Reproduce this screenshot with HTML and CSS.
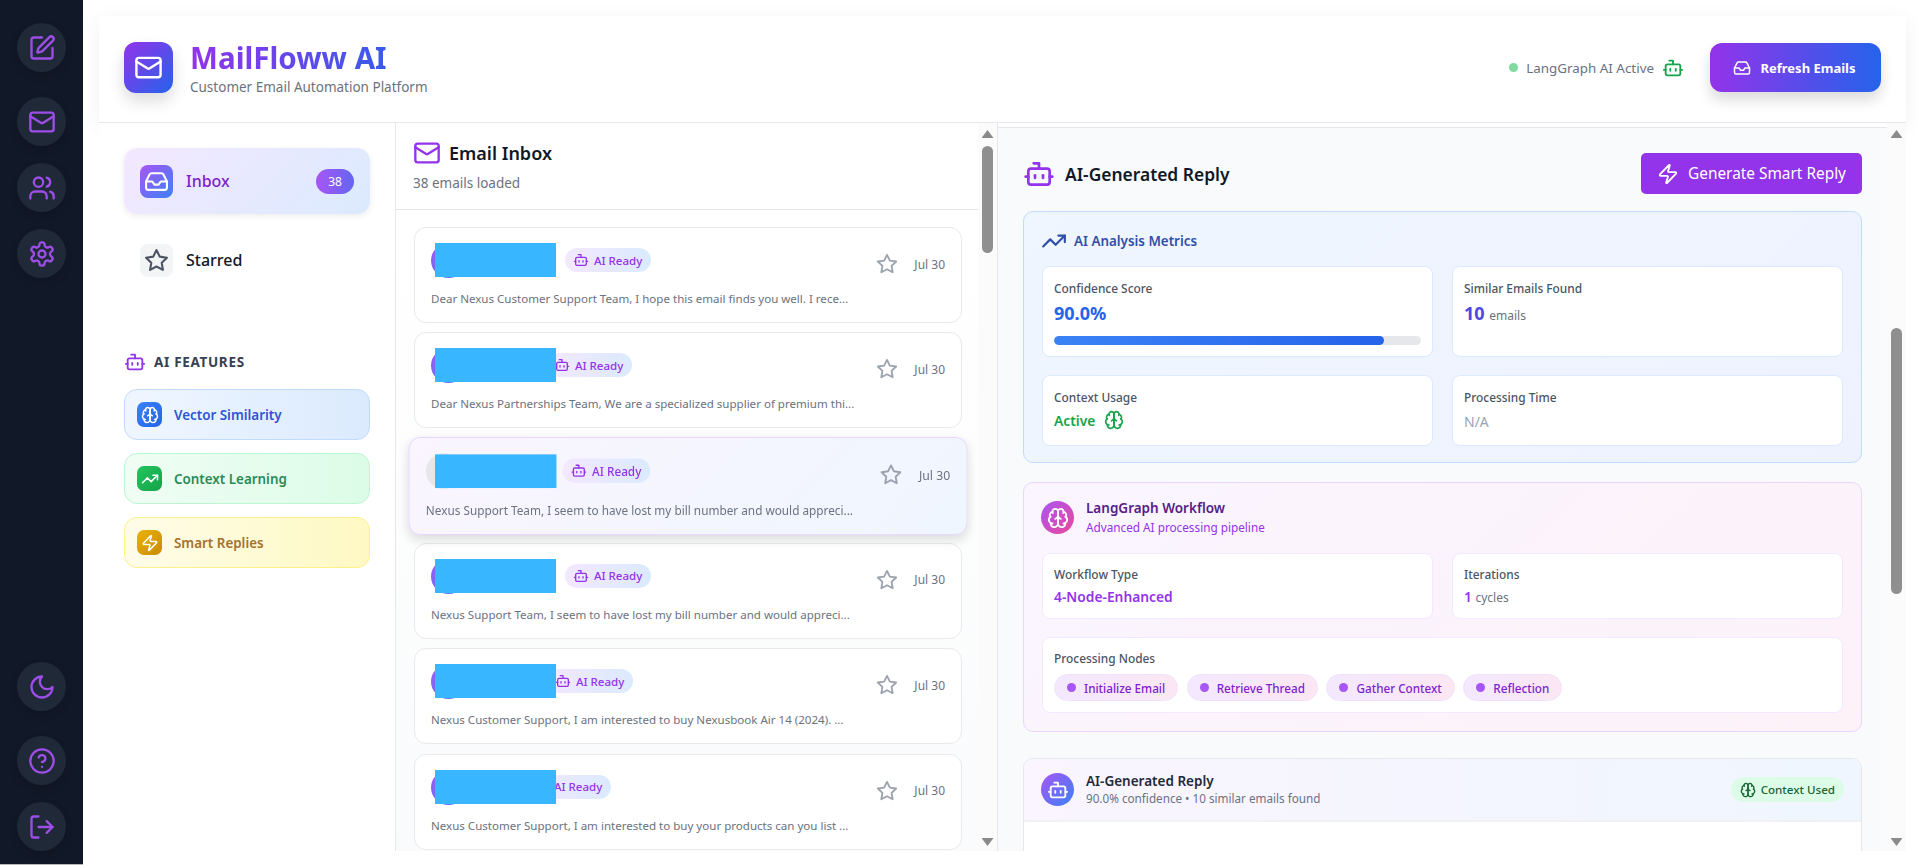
FILE: index.html
```html
<!DOCTYPE html>
<html lang="en">
<head>
<meta charset="utf-8">
<title>MailFloww AI</title>
<link rel="stylesheet" href="styles.css">
</head>
<body>
<svg class="defs" aria-hidden="true">
  <symbol id="i-pen" viewBox="0 0 24 24"><path d="M12 3H5a2 2 0 0 0-2 2v14a2 2 0 0 0 2 2h14a2 2 0 0 0 2-2v-7"/><path d="M18.375 2.625a1 1 0 0 1 3 3l-9.013 9.014a2 2 0 0 1-.853.505l-2.873.84a.5.5 0 0 1-.62-.62l.84-2.873a2 2 0 0 1 .506-.852z"/></symbol>
  <symbol id="i-mail" viewBox="0 0 24 24"><rect width="20" height="16" x="2" y="4" rx="2"/><path d="m22 7-8.97 5.7a1.94 1.94 0 0 1-2.06 0L2 7"/></symbol>
  <symbol id="i-users" viewBox="0 0 24 24"><path d="M16 21v-2a4 4 0 0 0-4-4H6a4 4 0 0 0-4 4v2"/><circle cx="9" cy="7" r="4"/><path d="M22 21v-2a4 4 0 0 0-3-3.87"/><path d="M16 3.13a4 4 0 0 1 0 7.75"/></symbol>
  <symbol id="i-settings" viewBox="0 0 24 24"><path d="M12.22 2h-.44a2 2 0 0 0-2 2v.18a2 2 0 0 1-1 1.73l-.43.25a2 2 0 0 1-2 0l-.15-.08a2 2 0 0 0-2.73.73l-.22.38a2 2 0 0 0 .73 2.73l.15.1a2 2 0 0 1 1 1.72v.51a2 2 0 0 1-1 1.74l-.15.09a2 2 0 0 0-.73 2.73l.22.38a2 2 0 0 0 2.73.73l.15-.08a2 2 0 0 1 2 0l.43.25a2 2 0 0 1 1 1.73V20a2 2 0 0 0 2 2h.44a2 2 0 0 0 2-2v-.18a2 2 0 0 1 1-1.73l.43-.25a2 2 0 0 1 2 0l.15.08a2 2 0 0 0 2.73-.73l.22-.39a2 2 0 0 0-.73-2.73l-.15-.08a2 2 0 0 1-1-1.74v-.5a2 2 0 0 1 1-1.74l.15-.09a2 2 0 0 0 .73-2.73l-.22-.38a2 2 0 0 0-2.73-.73l-.15.08a2 2 0 0 1-2 0l-.43-.25a2 2 0 0 1-1-1.73V4a2 2 0 0 0-2-2z"/><circle cx="12" cy="12" r="3"/></symbol>
  <symbol id="i-moon" viewBox="0 0 24 24"><path d="M12 3a6 6 0 0 0 9 9 9 9 0 1 1-9-9Z"/></symbol>
  <symbol id="i-help" viewBox="0 0 24 24"><circle cx="12" cy="12" r="10"/><path d="M9.09 9a3 3 0 0 1 5.83 1c0 2-3 3-3 3"/><path d="M12 17h.01"/></symbol>
  <symbol id="i-logout" viewBox="0 0 24 24"><path d="M9 21H5a2 2 0 0 1-2-2V5a2 2 0 0 1 2-2h4"/><polyline points="16 17 21 12 16 7"/><line x1="21" x2="9" y1="12" y2="12"/></symbol>
  <symbol id="i-inbox" viewBox="0 0 24 24"><polyline points="22 12 16 12 14 15 10 15 8 12 2 12"/><path d="M5.45 5.11 2 12v6a2 2 0 0 0 2 2h16a2 2 0 0 0 2-2v-6l-3.45-6.89A2 2 0 0 0 16.76 4H7.24a2 2 0 0 0-1.79 1.11z"/></symbol>
  <symbol id="i-star" viewBox="0 0 24 24"><polygon points="12 2 15.09 8.26 22 9.27 17 14.14 18.18 21.02 12 17.77 5.82 21.02 7 14.14 2 9.27 8.91 8.26 12 2"/></symbol>
  <symbol id="i-bot" viewBox="0 0 24 24"><path d="M12 8V4H8"/><rect width="16" height="12" x="4" y="8" rx="2"/><path d="M2 14h2"/><path d="M20 14h2"/><path d="M15 13v2"/><path d="M9 13v2"/></symbol>
  <symbol id="i-trend" viewBox="0 0 24 24"><polyline points="22 7 13.5 15.5 8.5 10.5 2 17"/><polyline points="16 7 22 7 22 13"/></symbol>
  <symbol id="i-zap" viewBox="0 0 24 24"><path d="M4 14a1 1 0 0 1-.78-1.63l9.9-10.2a.5.5 0 0 1 .86.46l-1.92 6.02A1 1 0 0 0 13 10h7a1 1 0 0 1 .78 1.63l-9.9 10.2a.5.5 0 0 1-.86-.46l1.92-6.02A1 1 0 0 0 11 14z"/></symbol>
  <symbol id="i-brain" viewBox="0 0 24 24"><path d="M12 5a3 3 0 1 0-5.997.125 4 4 0 0 0-2.526 5.77 4 4 0 0 0 .556 6.588A4 4 0 1 0 12 18Z"/><path d="M12 5a3 3 0 1 1 5.997.125 4 4 0 0 1 2.526 5.77 4 4 0 0 1-.556 6.588A4 4 0 1 1 12 18Z"/><path d="M15 13a4.5 4.5 0 0 1-3-4 4.5 4.5 0 0 1-3 4"/><path d="M17.599 6.5a3 3 0 0 0 .399-1.375"/><path d="M6.003 5.125A3 3 0 0 0 6.401 6.5"/><path d="M3.477 10.896a4 4 0 0 1 .585-.396"/><path d="M19.938 10.5a4 4 0 0 1 .585.396"/><path d="M6 18a4 4 0 0 1-1.967-.516"/><path d="M19.967 17.484A4 4 0 0 1 18 18"/></symbol>
</svg>

<nav class="rail">
  <div class="rail-group">
    <button class="rail-btn"><svg class="ico s28"><use href="#i-pen"/></svg></button>
    <button class="rail-btn gap-wide"><svg class="ico s28"><use href="#i-mail"/></svg></button>
    <button class="rail-btn"><svg class="ico s28"><use href="#i-users"/></svg></button>
    <button class="rail-btn"><svg class="ico s28"><use href="#i-settings"/></svg></button>
  </div>
  <div class="rail-group">
    <button class="rail-btn"><svg class="ico s28"><use href="#i-moon"/></svg></button>
    <button class="rail-btn gap-wide"><svg class="ico s28"><use href="#i-help"/></svg></button>
    <button class="rail-btn"><svg class="ico s28"><use href="#i-logout"/></svg></button>
  </div>
</nav>

<main class="main">
  <header class="topbar">
    <div class="brand">
      <div class="logo"><svg class="ico s29"><use href="#i-mail"/></svg></div>
      <div>
        <h1 class="brand-name">MailFloww AI</h1>
        <p class="brand-sub">Customer Email Automation Platform</p>
      </div>
    </div>
    <div class="top-actions">
      <span class="status-dot"></span>
      <span class="status-text">LangGraph AI Active</span>
      <svg class="ico s22 green status-bot"><use href="#i-bot"/></svg>
      <button class="refresh"><svg class="ico s18"><use href="#i-inbox"/></svg>Refresh Emails</button>
    </div>
  </header>

  <div class="panels">
    <aside class="left">
      <a class="nav-item is-current">
        <span class="nav-ico"><svg class="ico s25"><use href="#i-inbox"/></svg></span>
        <span class="nav-label">Inbox</span>
        <span class="badge">38</span>
      </a>
      <a class="nav-item">
        <span class="nav-ico plain"><svg class="ico s25"><use href="#i-star"/></svg></span>
        <span class="nav-label">Starred</span>
      </a>
      <h2 class="features-title"><svg class="ico s22 purple"><use href="#i-bot"/></svg>AI FEATURES</h2>
      <div class="feature blue"><span class="feature-ico"><svg class="ico s18"><use href="#i-brain"/></svg></span>Vector Similarity</div>
      <div class="feature grn"><span class="feature-ico"><svg class="ico s18"><use href="#i-trend"/></svg></span>Context Learning</div>
      <div class="feature yel"><span class="feature-ico"><svg class="ico s18"><use href="#i-zap"/></svg></span>Smart Replies</div>
    </aside>

    <section class="inbox">
      <div class="inbox-body">
        <div class="inbox-head">
          <h2 class="inbox-title"><svg class="ico s28 purple"><use href="#i-mail"/></svg>Email Inbox</h2>
          <p class="inbox-sub">38 emails loaded</p>
        </div>
        <div class="list">
          <article class="mail">
            <div class="mail-row">
              <span class="avatar"></span><span class="name n82"></span>
              <span class="ready"><svg class="ico s16"><use href="#i-bot"/></svg>AI Ready</span>
              <span class="mail-meta"><svg class="ico s22 star"><use href="#i-star"/></svg><time>Jul 30</time></span>
            </div>
            <p class="preview">Dear Nexus Customer Support Team, I hope this email finds you well. I rece...</p>
            <span class="redact"></span>
          </article>
          <article class="mail">
            <div class="mail-row">
              <span class="avatar"></span><span class="name n63"></span>
              <span class="ready"><svg class="ico s16"><use href="#i-bot"/></svg>AI Ready</span>
              <span class="mail-meta"><svg class="ico s22 star"><use href="#i-star"/></svg><time>Jul 30</time></span>
            </div>
            <p class="preview">Dear Nexus Partnerships Team, We are a specialized supplier of premium thi...</p>
            <span class="redact"></span>
          </article>
          <article class="mail selected">
            <div class="mail-row">
              <span class="avatar"></span><span class="name n82"></span>
              <span class="ready"><svg class="ico s16"><use href="#i-bot"/></svg>AI Ready</span>
              <span class="mail-meta"><svg class="ico s22 star"><use href="#i-star"/></svg><time>Jul 30</time></span>
            </div>
            <p class="preview">Nexus Support Team, I seem to have lost my bill number and would appreci...</p>
            <span class="redact"></span>
          </article>
          <article class="mail">
            <div class="mail-row">
              <span class="avatar"></span><span class="name n82"></span>
              <span class="ready"><svg class="ico s16"><use href="#i-bot"/></svg>AI Ready</span>
              <span class="mail-meta"><svg class="ico s22 star"><use href="#i-star"/></svg><time>Jul 30</time></span>
            </div>
            <p class="preview">Nexus Support Team, I seem to have lost my bill number and would appreci...</p>
            <span class="redact"></span>
          </article>
          <article class="mail">
            <div class="mail-row">
              <span class="avatar"></span><span class="name n64"></span>
              <span class="ready"><svg class="ico s16"><use href="#i-bot"/></svg>AI Ready</span>
              <span class="mail-meta"><svg class="ico s22 star"><use href="#i-star"/></svg><time>Jul 30</time></span>
            </div>
            <p class="preview">Nexus Customer Support, I am interested to buy Nexusbook Air 14 (2024). ...</p>
            <span class="redact"></span>
          </article>
          <article class="mail">
            <div class="mail-row">
              <span class="avatar"></span><span class="name n42"></span>
              <span class="ready"><svg class="ico s16"><use href="#i-bot"/></svg>AI Ready</span>
              <span class="mail-meta"><svg class="ico s22 star"><use href="#i-star"/></svg><time>Jul 30</time></span>
            </div>
            <p class="preview">Nexus Customer Support, I am interested to buy your products can you list ...</p>
            <span class="redact"></span>
          </article>
        </div>
      </div>
      <div class="sbar">
        <span class="arrow up"></span>
        <span class="thumb t-inbox"></span>
        <span class="arrow down"></span>
      </div>
    </section>

    <section class="detail">
      <div class="detail-body">
        <div class="detail-head">
          <h2 class="detail-title"><svg class="ico s32 purple"><use href="#i-bot"/></svg>AI-Generated Reply</h2>
          <button class="generate"><svg class="ico s22"><use href="#i-zap"/></svg>Generate Smart Reply</button>
        </div>

        <div class="metrics">
          <h3 class="metrics-title"><svg class="ico s26"><use href="#i-trend"/></svg>AI Analysis Metrics</h3>
          <div class="metric-grid">
            <div class="cell">
              <div class="cell-label">Confidence Score</div>
              <div class="big blue-text">90.0%</div>
              <div class="bar"><div class="bar-fill"></div></div>
            </div>
            <div class="cell">
              <div class="cell-label">Similar Emails Found</div>
              <div class="big indigo-text">10 <small>emails</small></div>
            </div>
            <div class="cell">
              <div class="cell-label">Context Usage</div>
              <div class="ctx-on">Active <svg class="ico s20"><use href="#i-brain"/></svg></div>
            </div>
            <div class="cell">
              <div class="cell-label">Processing Time</div>
              <div class="na">N/A</div>
            </div>
          </div>
        </div>

        <div class="workflow">
          <div class="wf-head">
            <span class="round pink"><svg class="ico s22"><use href="#i-brain"/></svg></span>
            <div>
              <h3 class="wf-title">LangGraph Workflow</h3>
              <p class="wf-sub">Advanced AI processing pipeline</p>
            </div>
          </div>
          <div class="wf-grid">
            <div class="cell wf-cell">
              <div class="cell-label">Workflow Type</div>
              <div class="wf-value">4-Node-Enhanced</div>
            </div>
            <div class="cell wf-cell">
              <div class="cell-label">Iterations</div>
              <div class="wf-value">1 <small>cycles</small></div>
            </div>
            <div class="cell wf-cell wide">
              <div class="cell-label">Processing Nodes</div>
              <div class="nodes">
                <span class="node">Initialize Email</span>
                <span class="node">Retrieve Thread</span>
                <span class="node">Gather Context</span>
                <span class="node">Reflection</span>
              </div>
            </div>
          </div>
        </div>

        <div class="reply">
          <div class="reply-head">
            <span class="round violet"><svg class="ico s22"><use href="#i-bot"/></svg></span>
            <div>
              <h3 class="reply-title">AI-Generated Reply</h3>
              <p class="reply-sub">90.0% confidence • 10 similar emails found</p>
            </div>
            <span class="used"><svg class="ico s16"><use href="#i-brain"/></svg>Context Used</span>
          </div>
          <div class="reply-body"></div>
        </div>
      </div>
      <div class="sbar">
        <span class="arrow up"></span>
        <span class="thumb t-detail"></span>
        <span class="arrow down"></span>
      </div>
    </section>
  </div>
</main>
</body>
</html>
```

FILE: styles.css
```css
* { box-sizing: border-box; }
html, body { height: 100%; }
body {
  margin: 0;
  display: flex;
  overflow: hidden;
  background: #fff;
  color: #111827;
  font-family: "Noto Sans", "Open Sans", sans-serif;
}
h1, h2, h3, p { margin: 0; }
button { font-family: inherit; border: 0; cursor: pointer; }

.defs { display: none; }
.ico { display: block; flex: none; fill: none; stroke: currentColor; stroke-width: 2; stroke-linecap: round; stroke-linejoin: round; }
.s16 { width: 16px; height: 16px; }
.s18 { width: 18px; height: 18px; }
.s20 { width: 20px; height: 20px; }
.s22 { width: 22px; height: 22px; }
.s25 { width: 25px; height: 25px; }
.s26 { width: 26px; height: 26px; }
.s28 { width: 28px; height: 28px; }
.s29 { width: 29px; height: 29px; }
.s32 { width: 32px; height: 32px; }
.purple { color: #9333ea; }
.green { color: #16a34a; }

/* Left icon rail */
.rail {
  flex: none;
  width: 83px;
  height: 865px;
  background: #111827;
  border-bottom: 1px solid #b4b6ba;
  padding: 23px 0 13px;
  display: flex;
  flex-direction: column;
  justify-content: space-between;
  align-items: center;
}
.rail-group { display: flex; flex-direction: column; gap: 17px; }
.rail-btn {
  width: 49px;
  height: 49px;
  border-radius: 50%;
  background: #1f2937;
  color: #9d4ee6;
  display: flex;
  align-items: center;
  justify-content: center;
  padding: 0;
  box-shadow: 0 4px 8px rgba(0,0,0,.12);
}
.rail-btn.gap-wide { margin-top: 8px; }

/* Main frame */
.main {
  flex: 1;
  min-width: 0;
  height: 865px;
  padding: 16px 14px 14px 16px;
  display: flex;
  flex-direction: column;
}
.topbar {
  flex: none;
  height: 107px;
  padding: 0 25px 4px;
  display: flex;
  align-items: center;
  justify-content: space-between;
  background: #fff;
  border-bottom: 1px solid #e5e7eb;
  box-shadow: 0 4px 20px rgba(0,0,0,.06);
}
.brand { display: flex; align-items: center; gap: 17px; }
.logo {
  width: 49px;
  height: 51px;
  border-radius: 12px;
  background: linear-gradient(135deg, #9333ea, #2563eb);
  color: #fff;
  display: flex;
  align-items: center;
  justify-content: center;
  box-shadow: 0 8px 16px rgba(0,0,0,.14);
}
.brand-name {
  font-size: 29.6px;
  line-height: 36px;
  font-weight: 700;
  background: linear-gradient(90deg, #9333ea, #2563eb);
  -webkit-background-clip: text;
  background-clip: text;
  color: transparent;
  margin-top: 2px;
}
.brand-sub { font-size: 13.5px; line-height: 20px; color: #6b7280; margin-top: 1px; }
.top-actions { display: flex; align-items: center; }
.status-dot { width: 9px; height: 9px; border-radius: 50%; background: #7fdc9e; margin: 1px 8px 0 0; }
.status-text { font-size: 13.4px; color: #6b7280; margin-top: 2px; }
.status-bot { margin: 1px 26px 0 8px; }
.refresh {
  width: 171px;
  height: 49px;
  padding: 2px 2px 0 0;
  border-radius: 12px;
  background: linear-gradient(90deg, #9333ea, #2563eb);
  color: #fff;
  font-size: 13px;
  font-weight: 700;
  display: flex;
  align-items: center;
  justify-content: center;
  gap: 9px;
  box-shadow: 0 8px 14px rgba(0,0,0,.14);
}

.panels { flex: 1; min-height: 0; display: flex; background: #fff; }

/* Folder column */
.left {
  flex: none;
  width: 297px;
  padding: 25px 25px 0;
  border-right: 1px solid #e5e7eb;
  background: #fff;
}
.nav-item {
  height: 66px;
  border-radius: 13px;
  padding: 0 16px;
  display: flex;
  align-items: center;
  gap: 13px;
  margin-bottom: 13px;
  font-size: 16px;
  font-weight: 500;
  color: #111827;
}
.nav-item.is-current {
  background: linear-gradient(135deg, #f3e8ff, #dbeafe);
  color: #7e22ce;
  box-shadow: 0 2px 6px rgba(0,0,0,.08);
}
.nav-ico {
  width: 33px;
  height: 33px;
  border-radius: 8px;
  display: flex;
  align-items: center;
  justify-content: center;
  color: #fff;
  background: linear-gradient(135deg, #a855f7, #3b82f6);
}
.nav-ico.plain { background: #f3f4f6; color: #4b5563; }
.badge {
  margin-left: auto;
  width: 38px;
  height: 25px;
  border-radius: 13px;
  background: linear-gradient(90deg, #a855f7, #6366f1);
  color: #fff;
  font-size: 12px;
  font-weight: 400;
  display: flex;
  align-items: center;
  justify-content: center;
}
.features-title {
  margin: 59px 0 17px;
  height: 20px;
  display: flex;
  align-items: center;
  gap: 8px;
  font-size: 13.5px;
  font-weight: 700;
  letter-spacing: .05em;
  color: #374151;
}
.feature {
  height: 51px;
  margin-bottom: 13px;
  padding: 0 12px;
  border: 1px solid;
  border-radius: 13px;
  display: flex;
  align-items: center;
  gap: 12px;
  font-size: 13.4px;
  font-weight: 600;
}
.feature-ico {
  width: 25px;
  height: 25px;
  border-radius: 7px;
  display: flex;
  align-items: center;
  justify-content: center;
  color: #fff;
}
.feature.blue { background: linear-gradient(90deg, #eff6ff, #dbeafe); border-color: #bfdbfe; color: #2f55d4; }
.feature.blue .feature-ico { background: linear-gradient(135deg, #3b82f6, #2563eb); }
.feature.grn { background: linear-gradient(90deg, #f0fdf4, #dcfce7); border-color: #bbf7d0; color: #2b8a57; }
.feature.grn .feature-ico { background: linear-gradient(135deg, #22c55e, #16a34a); }
.feature.yel { background: linear-gradient(90deg, #fefce8, #fef9c3); border-color: #fef08a; color: #a5722a; }
.feature.yel .feature-ico { background: linear-gradient(135deg, #eab308, #ca8a04); }

/* Fake scrollbars */
.sbar {
  flex: none;
  width: 19px;
  display: flex;
  flex-direction: column;
  align-items: center;
  padding: 7px 0 5px;
  background: #fbfbfc;
}
.arrow { flex: none; width: 12px; height: 8px; background: #8a8a8a; }
.arrow.up { clip-path: polygon(50% 0, 100% 100%, 0 100%); }
.arrow.down { clip-path: polygon(0 0, 100% 0, 50% 100%); margin-top: auto; }
.thumb { flex: none; width: 11px; border-radius: 6px; background: #8f8f8f; }
.t-inbox { height: 107px; margin-top: 8px; }
.t-detail { height: 266px; margin-top: 190px; }

/* Inbox column */
.inbox {
  flex: none;
  width: 602px;
  display: flex;
  border-right: 1px solid #e5e7eb;
  background: #fff;
}
.inbox-body { flex: 1; min-width: 0; display: flex; flex-direction: column; overflow: hidden; }
.inbox-head { flex: none; height: 87px; padding: 17px 18px 0 17px; border-bottom: 1px solid #e5e7eb; }
.inbox-title { display: flex; align-items: center; gap: 8px; height: 26px; font-size: 18px; font-weight: 600; color: #111827; }
.inbox-sub { font-size: 13.5px; line-height: 18px; color: #6b7280; margin-top: 8px; }
.list { flex: 1; min-height: 0; padding: 17px 16px 0 18px; background: linear-gradient(180deg, #fff, #fafbfc); }
.mail {
  position: relative;
  height: 96px;
  margin-bottom: 9.33px;
  padding: 15px 16px 0 16px;
  background: #fff;
  border: 1px solid #e8eaee;
  border-radius: 12px;
}
.mail.selected {
  z-index: 1;
  transform: scale(1.02);
  background: linear-gradient(135deg, #faf5ff, #eff6ff);
  border-color: #e9d5ff;
  box-shadow: 0 4px 10px rgba(0,0,0,.13);
}
.mail-row { display: flex; align-items: flex-start; height: 35px; }
.avatar { flex: none; width: 35px; height: 35px; border-radius: 50%; background: linear-gradient(135deg, #a855f7, #3b82f6); margin-right: 9px; }
.selected .avatar { background: #e5e7eb; }
.name { flex: none; margin-right: 8px; }
.n82 { width: 82px; }
.n63 { width: 63px; }
.n64 { width: 64px; }
.n42 { width: 42px; }
.ready {
  flex: none;
  height: 24px;
  margin-top: 5px;
  padding: 0 9px 0 8px;
  border-radius: 12px;
  display: flex;
  align-items: center;
  gap: 5px;
  font-size: 11.5px;
  font-weight: 500;
  color: #9333ea;
  background: linear-gradient(90deg, #f3e8ff, #dbeafe);
}
.mail-meta { margin-left: auto; display: flex; align-items: center; gap: 16px; margin-top: 10px; font-size: 12px; color: #6b7280; }
.star { color: #9ca3af; }
.preview { margin-top: 12px; font-size: 11.55px; line-height: 18px; color: #6b7280; white-space: nowrap; }
.redact { position: absolute; left: 20px; top: 15px; width: 121px; height: 34px; background: #38b6ff; z-index: 2; }
.selected .redact { left: 25px; top: 16px; width: 119px; height: 33px; }

/* Detail column */
.detail { flex: 1; min-width: 0; display: flex; background: #fff; }
.detail-body {
  flex: 1;
  min-width: 0;
  margin-top: 4px;
  padding: 25px 25px 0;
  border-top: 1px solid #e5e7eb;
  background: #f9fafb;
  overflow: hidden;
}
.detail-head { display: flex; align-items: center; justify-content: space-between; height: 41px; margin-bottom: 17px; }
.detail-title { display: flex; align-items: center; gap: 10px; font-size: 17.4px; font-weight: 600; color: #111827; }
.generate {
  width: 221px;
  height: 41px;
  border-radius: 5px;
  background: #9333ea;
  color: #fff;
  font-size: 15.4px;
  display: flex;
  align-items: center;
  justify-content: center;
  gap: 9px;
  padding: 0;
}
.metrics {
  padding: 18px 18px 16px;
  background: linear-gradient(135deg, #eff6ff, #eef2ff);
  border: 1px solid #bfdbfe;
  border-radius: 10px;
}
.metrics-title { display: flex; align-items: center; gap: 7px; height: 22px; margin-bottom: 14px; margin-left: -1px; font-size: 13.4px; font-weight: 600; color: #2f4fa8; }
.metric-grid { display: grid; grid-template-columns: 391px 391px; gap: 18px 19px; }
.cell { background: #fff; border: 1px solid #dbeafe; border-radius: 8px; padding: 12px 11px 11px; }
.cell-label { font-size: 11.9px; line-height: 18px; font-weight: 500; color: #4b5563; }
.big { font-size: 18px; line-height: 26px; font-weight: 700; margin-top: 3px; }
.big small { font-size: 12px; font-weight: 400; color: #6b7280; }
.blue-text { color: #2563eb; }
.indigo-text { color: #4f46e5; }
.bar { height: 9px; margin-top: 10px; border-radius: 5px; background: #e5e7eb; overflow: hidden; }
.bar-fill { width: 90%; height: 100%; border-radius: 5px; background: linear-gradient(90deg, #3b82f6, #2563eb); }
.ctx-on { display: flex; align-items: center; gap: 9px; height: 28px; font-size: 13.8px; font-weight: 600; color: #16a34a; }
.na { height: 28px; padding-top: 6px; font-size: 14px; line-height: 20px; color: #9ca3af; }

.workflow {
  margin-top: 19px;
  height: 250px;
  padding: 18px 18px 0;
  background: linear-gradient(135deg, #faf5ff, #fdf2f8);
  border: 1px solid #e9d5ff;
  border-radius: 10px;
}
.wf-head { display: flex; align-items: center; gap: 12px; height: 33px; margin: 0 0 19px -1px; }
.round {
  flex: none;
  width: 33px;
  height: 33px;
  border-radius: 50%;
  display: flex;
  align-items: center;
  justify-content: center;
  color: #fff;
}
.round.pink { background: linear-gradient(135deg, #a855f7, #ec4899); }
.round.violet { background: linear-gradient(135deg, #a855f7, #3b82f6); }
.wf-title { font-size: 13.5px; line-height: 18px; font-weight: 600; color: #581c87; }
.wf-sub { font-size: 11.75px; line-height: 17px; margin-top: 2px; color: #9333ea; }
.wf-grid { display: grid; grid-template-columns: 391px 391px; gap: 18px 19px; }
.wf-cell { border-color: #f3e8ff; padding-top: 11px; }
.wf-cell:not(.wide) { height: 66px; }
.wide { grid-column: 1 / 3; height: 76px; }
.wf-value { font-size: 13.8px; line-height: 22px; font-weight: 600; color: #9333ea; margin-top: 3px; }
.wf-value small { font-size: 12px; font-weight: 400; color: #6b7280; }
.nodes { display: flex; gap: 8.5px; margin-top: 7px; }
.node {
  height: 27px;
  padding: 0 12px;
  display: flex;
  align-items: center;
  gap: 8px;
  border: 1px solid #f0e2fb;
  border-radius: 14px;
  background: linear-gradient(90deg, #f3e8ff, #fce7f3);
  font-size: 11.7px;
  font-weight: 500;
  color: #7e22ce;
}
.node::before { content: ""; width: 9px; height: 9px; border-radius: 50%; background: #a855f7; }

.reply { margin-top: 26px; background: #fff; border: 1px solid #e5e7eb; border-radius: 10px; }
.reply-head {
  height: 63px;
  padding: 0 17px;
  display: flex;
  align-items: center;
  gap: 12px;
  background: linear-gradient(90deg, #faf5ff, #eff6ff);
  border-bottom: 2px solid #f0f1f4;
  border-radius: 10px 10px 0 0;
}
.reply-title { font-size: 13.5px; line-height: 18px; font-weight: 600; color: #1f2937; }
.reply-sub { font-size: 11.7px; line-height: 17px; color: #6b7280; }
.used {
  margin-left: auto;
  height: 25px;
  padding: 0 9px;
  border-radius: 13px;
  display: flex;
  align-items: center;
  gap: 5px;
  background: #dcfce7;
  font-size: 11.6px;
  font-weight: 500;
  color: #166534;
}
.reply-body { height: 120px; }
```
